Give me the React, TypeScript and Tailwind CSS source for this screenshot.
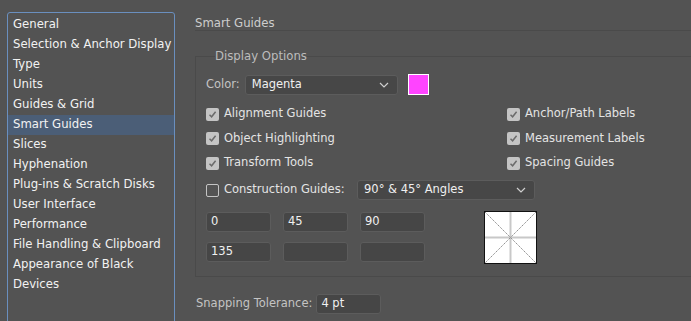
const FONT = { fontFamily: '"DejaVu Sans", "Liberation Sans", sans-serif' };

const SECTIONS = [
  "General",
  "Selection & Anchor Display",
  "Type",
  "Units",
  "Guides & Grid",
  "Smart Guides",
  "Slices",
  "Hyphenation",
  "Plug-ins & Scratch Disks",
  "User Interface",
  "Performance",
  "File Handling & Clipboard",
  "Appearance of Black",
  "Devices",
];

function Check({ on = true }: { on?: boolean }) {
  if (!on) {
    return <span className="h-[13px] w-[13px] shrink-0 rounded-[2px] border border-[#c4c4c4]" />;
  }
  return (
    <span className="flex h-[13px] w-[13px] shrink-0 items-center justify-center rounded-[2px] bg-[#c4c4c4]">
      <svg width="9" height="9" viewBox="0 0 9 9" fill="none">
        <path d="M1.5 4.8 L3.6 6.8 L7.6 1.8" stroke="#6b6b6b" strokeWidth="1.5" />
      </svg>
    </span>
  );
}

function CheckRow({ label, on = true }: { label: string; on?: boolean }) {
  return (
    <label className="flex h-[20px] items-center gap-[5px] whitespace-nowrap text-[11.5px] text-[#e4e4e4]">
      <Check on={on} />
      {label}
    </label>
  );
}

function Chevron() {
  return (
    <svg width="10" height="6" viewBox="0 0 10 6" fill="none">
      <path d="M1 1 L5 5 L9 1" stroke="#d0d0d0" strokeWidth="1.2" />
    </svg>
  );
}

function Select({ value, width }: { value: string; width: string }) {
  return (
    <div
      className={`flex h-[20px] items-center justify-between rounded-[3px] border border-[#5c5c5c] bg-[#474747] pl-[6px] pr-[8px] text-[11.5px] text-[#f0f0f0] ${width}`}
    >
      <span className="whitespace-nowrap">{value}</span>
      <Chevron />
    </div>
  );
}

function Field({ value = "" }: { value?: string }) {
  return (
    <div className="flex h-[20px] w-[65px] items-center rounded-[3px] border border-[#5c5c5c] bg-[#464646] px-[4px] text-[11.5px] text-[#f0f0f0]">
      {value}
    </div>
  );
}

function AnglePreview() {
  return (
    <svg width="53" height="53" viewBox="0 0 53 53">
      <rect x="0.5" y="0.5" width="52" height="52" fill="#ffffff" stroke="#111111" />
      <line x1="26.5" y1="1" x2="26.5" y2="52" stroke="#c8c8c8" strokeWidth="2" />
      <line x1="1" y1="26.5" x2="52" y2="26.5" stroke="#c8c8c8" strokeWidth="2" />
      <line x1="1" y1="1" x2="52" y2="52" stroke="#8f8f8f" strokeWidth="1" strokeDasharray="1.5 0.8" />
      <line x1="52" y1="1" x2="1" y2="52" stroke="#8f8f8f" strokeWidth="1" strokeDasharray="1.5 0.8" />
    </svg>
  );
}

export default function App() {
  return (
    <div className="flex h-[321px] w-[691px] overflow-hidden bg-[#535353]" style={FONT}>
      <ul className="ml-[7px] mt-[12px] h-[330px] w-[168px] shrink-0 rounded-[3px] border border-[#6a8fbf] pt-[2px]">
        {SECTIONS.map((s) => (
          <li
            key={s}
            className={`flex h-[20px] items-center whitespace-nowrap pl-[5px] text-[11.7px] text-[#f2f2f2] ${
              s === "Smart Guides" ? "bg-[#4b5e77]" : ""
            }`}
          >
            {s}
          </li>
        ))}
      </ul>

      <div className="ml-[20px] w-[520px] shrink-0 pt-[15px]">
        <div className="h-[16px] border-b border-[#4a4a4a] text-[11.7px] leading-[16px] text-[#cdcdcd]">
          Smart Guides
        </div>

        <fieldset className="mt-[18px] h-[228px] border border-r-0 border-[#4a4a4a] pl-[10px] pr-0">
          <legend className="ml-[9px] p-0 text-[11.7px] leading-[14px] text-[#bcbcbc]">Display Options</legend>

          <div className="mt-[11px] flex items-center">
            <span className="mr-[5px] text-[11.5px] text-[#c4c4c4]">Color:</span>
            <Select value="Magenta" width="w-[153px]" />
            <span className="ml-[10px] h-[21px] w-[21px] border border-white bg-[#ff44ff]" />
          </div>

          <div className="mt-[9px] grid grid-cols-[301px_1fr] gap-y-[4.5px]">
            <CheckRow label="Alignment Guides" />
            <CheckRow label="Anchor/Path Labels" />
            <CheckRow label="Object Highlighting" />
            <CheckRow label="Measurement Labels" />
            <CheckRow label="Transform Tools" />
            <CheckRow label="Spacing Guides" />
          </div>

          <div className="mt-[7px] flex items-center">
            <div className="w-[151px]">
              <CheckRow label="Construction Guides:" on={false} />
            </div>
            <Select value="90° & 45° Angles" width="w-[178px]" />
          </div>

          <div className="mt-[12px] grid grid-cols-[65px_65px_65px_53px] grid-rows-[20px_20px] gap-x-[12px] gap-y-[10px]">
            <Field value="0" />
            <Field value="45" />
            <Field value="90" />
            <div className="row-span-2 ml-[47px] self-center">
              <AnglePreview />
            </div>
            <Field value="135" />
            <Field />
            <Field />
          </div>
        </fieldset>

        <div className="mt-[17px] flex items-center gap-[4px]">
          <span className="ml-px whitespace-nowrap text-[11.5px] text-[#c4c4c4]">Snapping Tolerance:</span>
          <Field value="4 pt" />
        </div>
      </div>
    </div>
  );
}
